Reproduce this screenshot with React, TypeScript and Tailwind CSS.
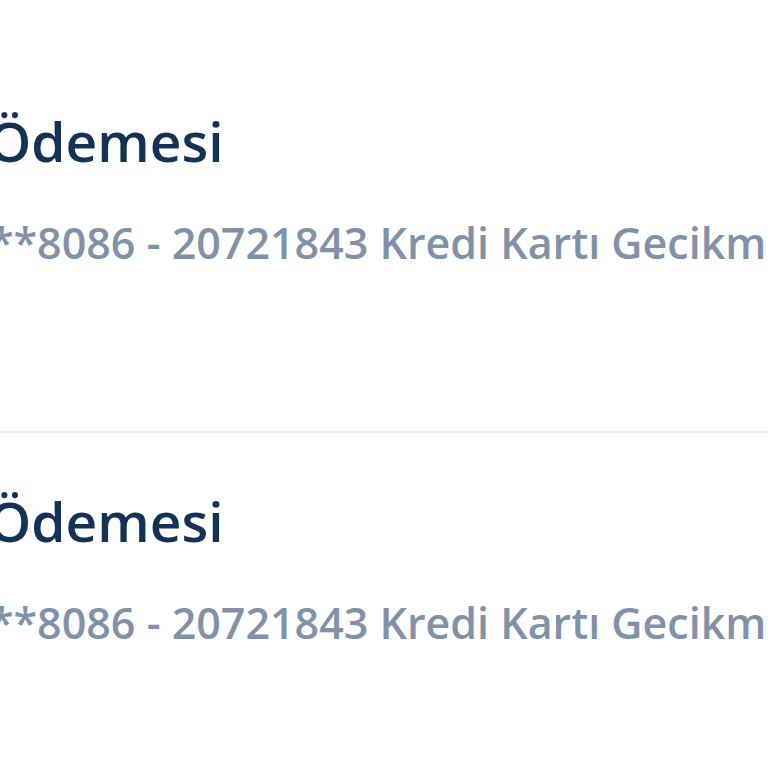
const rows = [
  { title: "Ödemesi", detail: "**8086 - 20721843 Kredi Kartı Gecikme Ödemesi" },
  { title: "Ödemesi", detail: "**8086 - 20721843 Kredi Kartı Gecikme Ödemesi" },
];

export default function App() {
  return (
    <div className="w-[768px] h-[768px] overflow-hidden bg-white pt-[53px] font-['Open_Sans',sans-serif]">
      {rows.map((row, i) => (
        <div
          key={i}
          className={`whitespace-nowrap pt-[56px] pb-[160px] ${i === 0 ? "border-b-2 border-[#e9ebef]" : ""}`}
        >
          <div className="-ml-[12px] text-[55px] leading-[64px] font-semibold text-[#133256]">
            {row.title}
          </div>
          <div className="mt-[42px] -ml-[10px] text-[43px] leading-[56px] font-semibold text-[#8192a8]">
            {row.detail}
          </div>
        </div>
      ))}
    </div>
  );
}
